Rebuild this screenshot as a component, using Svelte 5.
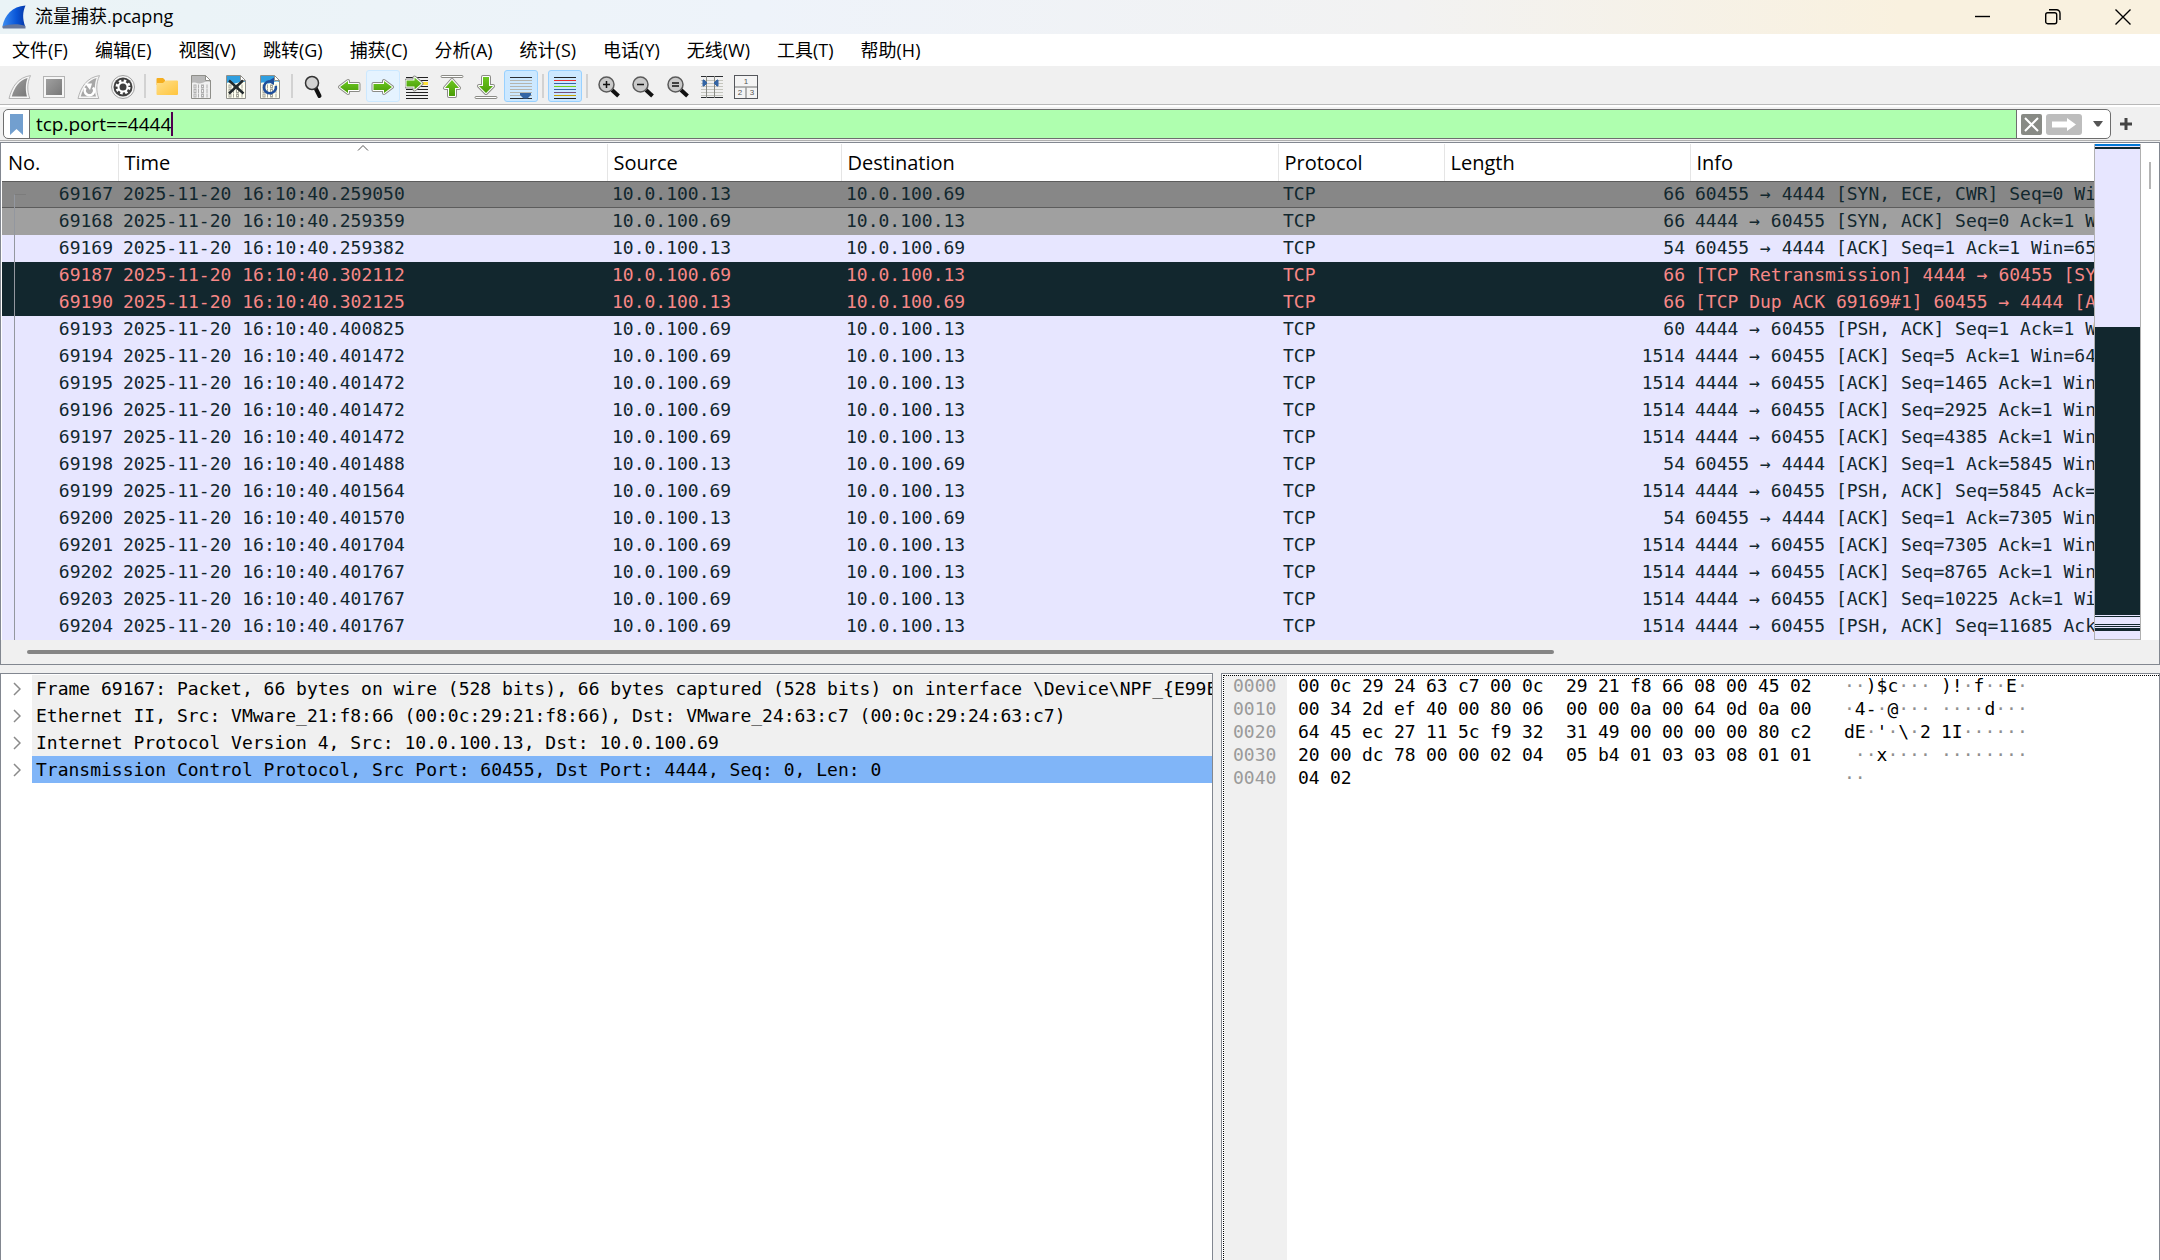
<script>
  const menus = [
    "文件(F)",
    "编辑(E)",
    "视图(V)",
    "跳转(G)",
    "捕获(C)",
    "分析(A)",
    "统计(S)",
    "电话(Y)",
    "无线(W)",
    "工具(T)",
    "帮助(H)",
  ];

  const toolGroups = [
    { size: "four", tools: ["start", "stop", "restart", "options"] },
    { size: "four", tools: ["open", "save", "close", "reload"] },
    {
      size: "seven",
      tools: ["find", "back", "forward", "goto", "first", "last", "autoscroll"],
    },
    { size: "one", tools: ["colorize"] },
    { size: "five", tools: ["zoom-in", "zoom-out", "zoom-reset", "resize", "layout"] },
  ];

  const pressed = ["autoscroll", "colorize"];

  const columns = ["No.", "Time", "Source", "Destination", "Protocol", "Length", "Info"];

  const A = "10.0.100.13";
  const B = "10.0.100.69";

  const packets = [
    [69167, "259050", A, B, 66, "60455 → 4444 [SYN, ECE, CWR] Seq=0 Win", "selected"],
    [69168, "259359", B, A, 66, "4444 → 60455 [SYN, ACK] Seq=0 Ack=1 Wi", "syn"],
    [69169, "259382", A, B, 54, "60455 → 4444 [ACK] Seq=1 Ack=1 Win=655"],
    [69187, "302112", B, A, 66, "[TCP Retransmission] 4444 → 60455 [SYN", "bad"],
    [69190, "302125", A, B, 66, "[TCP Dup ACK 69169#1] 60455 → 4444 [AC", "bad"],
    [69193, "400825", B, A, 60, "4444 → 60455 [PSH, ACK] Seq=1 Ack=1 Wi"],
    [69194, "401472", B, A, 1514, "4444 → 60455 [ACK] Seq=5 Ack=1 Win=642"],
    [69195, "401472", B, A, 1514, "4444 → 60455 [ACK] Seq=1465 Ack=1 Win="],
    [69196, "401472", B, A, 1514, "4444 → 60455 [ACK] Seq=2925 Ack=1 Win="],
    [69197, "401472", B, A, 1514, "4444 → 60455 [ACK] Seq=4385 Ack=1 Win="],
    [69198, "401488", A, B, 54, "60455 → 4444 [ACK] Seq=1 Ack=5845 Win="],
    [69199, "401564", B, A, 1514, "4444 → 60455 [PSH, ACK] Seq=5845 Ack=1"],
    [69200, "401570", A, B, 54, "60455 → 4444 [ACK] Seq=1 Ack=7305 Win="],
    [69201, "401704", B, A, 1514, "4444 → 60455 [ACK] Seq=7305 Ack=1 Win="],
    [69202, "401767", B, A, 1514, "4444 → 60455 [ACK] Seq=8765 Ack=1 Win="],
    [69203, "401767", B, A, 1514, "4444 → 60455 [ACK] Seq=10225 Ack=1 Win"],
    [69204, "401767", B, A, 1514, "4444 → 60455 [PSH, ACK] Seq=11685 Ack="],
  ];

  const layers = [
    "Frame 69167: Packet, 66 bytes on wire (528 bits), 66 bytes captured (528 bits) on interface \\Device\\NPF_{E99E6",
    "Ethernet II, Src: VMware_21:f8:66 (00:0c:29:21:f8:66), Dst: VMware_24:63:c7 (00:0c:29:24:63:c7)",
    "Internet Protocol Version 4, Src: 10.0.100.13, Dst: 10.0.100.69",
    "Transmission Control Protocol, Src Port: 60455, Dst Port: 4444, Seq: 0, Len: 0",
  ];

  const dump = [
    "00 0c 29 24 63 c7 00 0c 29 21 f8 66 08 00 45 02",
    "00 34 2d ef 40 00 80 06 00 00 0a 00 64 0d 0a 00",
    "64 45 ec 27 11 5c f9 32 31 49 00 00 00 00 80 c2",
    "20 00 dc 78 00 00 02 04 05 b4 01 03 03 08 01 01",
    "04 02",
  ].map((line, i) => {
    const bytes = line.split(" ");
    return {
      offset: (i * 16).toString(16).padStart(4, "0"),
      halves: [bytes.slice(0, 8), bytes.slice(8)],
    };
  });

  const toChar = (byte) => {
    const code = parseInt(byte, 16);
    return code >= 32 && code < 127 ? String.fromCharCode(code) : "·";
  };

  let filter = $state("tcp.port==4444");
  let selectedLayer = $state(3);
</script>

{#snippet fin(body)}
  <path d="M1 23.500C4 11.500 10 2.500 22.500.6 19 8 19 16 21.800 23.500z" fill="#f6f6f6" stroke="#b4b4b4" />
  <path d="M3.800 21.500C6.500 12 11.500 5 19.600 3 17.200 9.500 17.500 16 19 21.500z" fill={body} />
{/snippet}

{#snippet page(head, paper, ink)}
  <path d="M2.500.5h14l5 5v18h-19z" fill={paper} stroke="#8f8f8a" />
  <path d="M3 1h13.500v4.500H21V7c-5-1.500-7 2-11 1.500C7 8.200 5 7 3 8z" fill={head} />
  <path d="M16.500.5v5h5z" fill="#fff" stroke="#8f8f8a" />
  <g fill="none" stroke={ink} stroke-width="1">
    {#each [10, 14.5, 19] as y}
      <rect x="5" {y} width="2" height="3" />
      <path d="M9.500 {y - 0.5}v4M18 {y - 0.5}v4" />
      <rect x="12.500" {y} width="2" height="3" />
    {/each}
  </g>
{/snippet}

{#snippet arrow(d)}
  <path {d} fill="none" stroke="#8b8b86" stroke-width="4" stroke-linejoin="round" />
  <path {d} fill="url(#green)" stroke="#fff" stroke-width="2" stroke-linejoin="round" />
  <path {d} fill="url(#green)" />
{/snippet}

{#snippet lens(mark)}
  <path d="M15 15l6.500 6" stroke="#111" stroke-width="4" />
  <circle cx="9.500" cy="9.500" r="7.500" fill="#c9c9c9" stroke="#5a5a5a" stroke-width="1.500" />
  <path d={mark} stroke="#111" stroke-width="1.500" />
{/snippet}

{#snippet icon(name)}
  <svg viewBox="0 0 24 24" width="24" height="24" fill="none" aria-hidden="true">
    {#if name === "start"}
      {@render fin("url(#steel)")}
    {:else if name === "stop"}
      <rect x="1.500" y="1.500" width="21" height="21" fill="#f6f6f6" stroke="#b4b4b4" />
      <rect x="4" y="4" width="16" height="16" fill="url(#steel)" />
    {:else if name === "restart"}
      {@render fin("#a6a6a6")}
      <path d="M8.500 13a4.700 4.700 0 1 0 7.500-.5" stroke="#fff" stroke-width="2.600" />
      <path d="M8 8.500h7l-2 6.500z" fill="#fff" />
    {:else if name === "options"}
      <circle cx="12" cy="12" r="11.500" fill="#f4f4f4" stroke="#a2a2a2" />
      <circle cx="12" cy="12" r="9.500" fill="#3f3f3f" />
      <circle cx="12" cy="12" r="6" stroke="#fff" stroke-width="3" stroke-dasharray="2.400 2.312" />
      <circle cx="12" cy="12" r="4.500" stroke="#fff" stroke-width="2" />
    {:else if name === "open"}
      <path d="M1.500 4q0-1 1-1H8l2 2v5H1.500z" fill="#f5ae1f" />
      <path d="M1.500 8H8l2.500-2.500H22q1 0 1 1V19q0 1-1 1H2.500q-1 0-1-1z" fill="url(#amber)" />
    {:else if name === "save"}
      {@render page("#b9b9b9", "#f1f1f1", "#b0b0b0")}
    {:else if name === "close"}
      {@render page("#2f9fe0", "#fffff0", "#a5a59a")}
      <path d="M5 5.500l14.500 13M19 5.500L5 18.500" stroke="#22292c" stroke-width="2.400" />
    {:else if name === "reload"}
      {@render page("#2f9fe0", "#fffff0", "#a5a59a")}
      <path d="M11.500 6.300a6 6 0 1 0 6.300 4.700" stroke="#1f4f9a" stroke-width="2.600" />
      <path d="M16 2.500v7.500l-6.500-3.500z" fill="#1f4f9a" />
    {:else if name === "find"}
      <path d="M13.500 13l4 8" stroke="#111" stroke-width="4" stroke-linecap="round" />
      <circle cx="10" cy="8" r="6.500" fill="#d2d2d2" stroke="#333" stroke-width="1.500" />
    {:else if name === "back"}
      {@render arrow("M3 12l8-6v3h10.500v6H11v3z")}
    {:else if name === "forward"}
      {@render arrow("M21 12l-8-6v3H2.500v6H13v3z")}
    {:else if name === "goto"}
      <path d="M1 2.500h22M1 5.500h22M1 11.500h22M1 14.500h22M1 17.500h22M1 20.500h22M1 23.500h22" stroke="#222" />
      <path d="M17 7h6v3h-6z" fill="#ffe13a" />
      {@render arrow("M16.500 8.500l-7-6v3H1.500v6h8v3z")}
    {:else if name === "first"}
      <rect x="1" y=".5" width="22" height="2" rx="1" fill="#fff" stroke="#8b8b86" />
      {@render arrow("M12 5l-7 8h4v8h6v-8h4z")}
    {:else if name === "last"}
      {@render arrow("M12 18l-7-7h4V2h6v9h4z")}
      <rect x="1" y="21.500" width="22" height="2" rx="1" fill="#fff" stroke="#8b8b86" />
    {:else if name === "autoscroll"}
      <path d="M1 5.500h22M1 8.500h22M1 11.500h22M1 14.500h22M1 17.500h22M1 20.500h22" stroke="#b5b5ae" />
      <path d="M1 2.500h22M1 23.500h22" stroke="#2a2d30" />
      <path d="M11 18h11v2l-3.500 3.500h-4L11 20z" fill="#3465a4" />
    {:else if name === "colorize"}
      <path d="M1 2.500h22M1 23.500h22" stroke="#222" />
      <path d="M1 5.500h22" stroke="#ef2929" />
      <path d="M1 8.500h22M1 14.500h22" stroke="#3465a4" />
      <path d="M1 11.500h22" stroke="#73d216" />
      <path d="M1 17.500h22" stroke="#75507b" />
      <path d="M1 20.500h22" stroke="#c4a000" />
    {:else if name === "zoom-in"}
      {@render lens("M6 9.500h7M9.500 6v7")}
    {:else if name === "zoom-out"}
      {@render lens("M6 9.500h7")}
    {:else if name === "zoom-reset"}
      {@render lens("M6 8h7M6 11h7")}
    {:else if name === "resize"}
      <path d="M1 5.500h22M1 8.500h22M1 11.500h22M1 14.500h22M1 17.500h22M1 20.500h22" stroke="#c4c5bd" />
      <path d="M1 1.500h22M1 22.500h22" stroke="#2a2d30" />
      <path d="M6.500 1v22M14.500 1v22" stroke="#888a85" />
      <path d="M3 5h1l3 3-3 3H3zM18 5h-1l-3 3 3 3h1z" fill="#3465a4" stroke="#3465a4" />
    {:else if name === "layout"}
      <rect x=".5" y=".5" width="23" height="23" fill="#f4f4f4" stroke="#55575c" />
      <path d="M1 12h22M12 12v11" stroke="#9a9c9c" stroke-width="1.500" />
      <g class="digits">
        <text x="12" y="9">1</text>
        <text x="6" y="20">2</text>
        <text x="18" y="20">3</text>
      </g>
    {/if}
  </svg>
{/snippet}

<svg class="defs" width="0" height="0" aria-hidden="true">
  <defs>
    <linearGradient id="steel" x1="0" y1="0" x2="1" y2="1">
      <stop offset="0" stop-color="#a0a0a0" />
      <stop offset="1" stop-color="#787878" />
    </linearGradient>
    <linearGradient id="green" x1="0" y1="0" x2="0" y2="1">
      <stop offset="0" stop-color="#6cc722" />
      <stop offset="1" stop-color="#4a9c06" />
    </linearGradient>
    <linearGradient id="amber" x1="0" y1="0" x2="1" y2="1">
      <stop offset="0" stop-color="#ffe08c" />
      <stop offset="1" stop-color="#ffc53d" />
    </linearGradient>
    <linearGradient id="sea" x1="0" y1="0" x2="1" y2="0">
      <stop offset="0" stop-color="#3d8df0" />
      <stop offset="0.6" stop-color="#0a56d8" />
      <stop offset="1" stop-color="#0638a8" />
    </linearGradient>
  </defs>
</svg>

<div class="window">
  <header class="titlebar">
    <svg class="logo" viewBox="0 0 24 24" width="24" height="24" aria-hidden="true">
      <path d="M.5 21C3 10 10 1.500 23.500.5c-3 7-3 13-.5 20.500z" fill="url(#sea)" />
      <path d="M0 21.500C8 18.500 17 18.500 23.500 21v2.500H1z" fill="#66779c" />
    </svg>
    <h1>流量捕获.pcapng</h1>
    <div class="window-buttons">
      <button aria-label="Minimize">
        <svg viewBox="0 0 16 16" width="16" height="16"><path d="M0 7.500h15" /></svg>
      </button>
      <button aria-label="Restore">
        <svg viewBox="0 0 16 16" width="16" height="16">
          <rect x=".7" y="3.700" width="11" height="11" rx="2" />
          <path d="M4 .8h7.500a3.500 3.500 0 0 1 3.500 3.500V11" />
        </svg>
      </button>
      <button aria-label="Close">
        <svg viewBox="0 0 16 16" width="16" height="16"><path d="M.5.500l15 15M15.500.500l-15 15" /></svg>
      </button>
    </div>
  </header>

  <nav class="menubar">
    {#each menus as menu}
      <button>{menu}</button>
    {/each}
  </nav>

  <div class="toolbar">
    {#each toolGroups as group}
      <div class="group {group.size}">
        {#each group.tools as tool}
          <button
            class:pressed={pressed.includes(tool)}
            class:hover={tool === "forward"}
            aria-label={tool}
          >
            {@render icon(tool)}
          </button>
        {/each}
      </div>
    {/each}
  </div>

  <div class="filterbar">
    <div class="filter">
      <button class="bookmark" aria-label="Saved filters">
        <svg viewBox="0 0 13 21" width="13" height="21"><path d="M0 0h13v21l-6.500-6L0 21z" fill="#729fcf" /></svg>
      </button>
      <label class="field">
        <input aria-label="Display filter" bind:value={filter} spellcheck="false" />
        <span class="caret"></span>
      </label>
      <button class="clear" aria-label="Clear filter">
        <svg viewBox="0 0 21 21" width="21" height="21">
          <rect width="21" height="21" rx="2" fill="#888a85" />
          <path d="M4 4l13 13M17 4L4 17" stroke="#fff" stroke-width="2" />
        </svg>
      </button>
      <button class="apply" aria-label="Apply filter">
        <svg viewBox="0 0 36 21" width="36" height="21">
          <rect width="36" height="21" rx="3" fill="#bdbdbd" />
          <path d="M6 7.500h15V4l9 6.500-9 6.500v-3.500H6z" fill="#fff" />
        </svg>
      </button>
      <button class="history" aria-label="Recent filters">
        <svg viewBox="0 0 10 6" width="10" height="6"><path d="M0 0h10L6 5.500H4z" fill="#555" /></svg>
      </button>
    </div>
    <button class="add" aria-label="Add filter button">
      <svg viewBox="0 0 12 12" width="12" height="12"><path d="M6 0v12M0 6h12" stroke="#444" stroke-width="3" /></svg>
    </button>
  </div>

  <section class="packets">
    <div class="packet-row">
      <div class="list">
        <table>
          <colgroup>
            <col class="c-no" />
            <col class="c-time" />
            <col class="c-source" />
            <col class="c-destination" />
            <col class="c-protocol" />
            <col class="c-length" />
            <col />
          </colgroup>
          <thead>
            <tr>
              {#each columns as column}
                <th>
                  {column}
                  {#if column === "Time"}
                    <svg class="sort" viewBox="0 0 12 6" width="12" height="6">
                      <path d="M1 5.500l5-5 5 5" fill="none" stroke="#555" />
                    </svg>
                  {/if}
                </th>
              {/each}
            </tr>
          </thead>
          <tbody>
            {#each packets as [no, time, source, destination, length, info, kind]}
              <tr class={kind}>
                <td class="number">{no}</td>
                <td>2025-11-20 16:10:40.{time}</td>
                <td>{source}</td>
                <td>{destination}</td>
                <td>TCP</td>
                <td class="number">{length}</td>
                <td>{info}</td>
              </tr>
            {/each}
          </tbody>
        </table>
        <div class="related"></div>
      </div>
      <div class="minimap"></div>
      <div class="vscroll"><span></span></div>
    </div>
    <div class="hscroll"><span></span></div>
  </section>

  <div class="panes">
    <section class="details">
      <ul>
        {#each layers as layer, i}
          <li>
            <button class:chosen={i === selectedLayer} onclick={() => (selectedLayer = i)}>
              <svg viewBox="0 0 8 14" width="8" height="14"><path d="M1 1l6 6-6 6" fill="none" stroke="#8a8a8a" stroke-width="1.500" /></svg>
              <span>{layer}</span>
            </button>
          </li>
        {/each}
      </ul>
    </section>

    <section class="bytes">
      <div class="dump">
        {#each dump as line}
          <div class="line">
            <span class="offset">{line.offset}</span>
            {#each line.halves as half}
              <span class="half">
                {#each half as byte}<span>{byte}</span>{/each}
              </span>
            {/each}
            {#each line.halves as half}
              <span class="ascii">{#each half as byte}{#if toChar(byte) === "·"}<i>·</i>{:else}{toChar(byte)}{/if}{/each}</span>
            {/each}
          </div>
        {/each}
      </div>
    </section>
  </div>
</div>

<style>
  :global(body) {
    background: #f0f0f0;
  }

  .defs {
    position: absolute;
  }

  .window {
    display: flex;
    flex-direction: column;
    height: 100vh;
    overflow: hidden;
    font-family: "Open Sans", "Noto Sans CJK SC", sans-serif;
    font-size: 18px;
    color: #000;
  }

  button {
    display: flex;
    align-items: center;
    justify-content: center;
    margin: 0;
    padding: 0;
    border: 0;
    background: none;
    font: inherit;
    color: inherit;
  }

  svg {
    display: block;
    flex: none;
  }

  /* title bar */
  .titlebar {
    display: flex;
    align-items: center;
    flex: none;
    height: 34px;
    background: linear-gradient(90deg, #eaf3f6, #eef3fa 35%, #f2f2f2 65%, #f9f1df 88%);
  }

  .logo {
    margin: 0 9px 0 2px;
  }

  h1 {
    flex: 1;
    margin: 0;
    font-size: 18px;
    font-weight: normal;
    line-height: 32px;
    height: 34px;
  }

  .window-buttons {
    display: flex;
    padding-right: 2px;
  }

  .window-buttons button {
    width: 70px;
    height: 34px;
  }

  .window-buttons path,
  .window-buttons rect {
    fill: none;
    stroke: #000;
    stroke-width: 1.4;
  }

  /* menus */
  .menubar {
    display: flex;
    flex: none;
    gap: 2px;
    height: 32px;
    border-bottom: 2px solid #f0f0f0;
    background: #fff;
  }

  .menubar button {
    padding: 0 13px 2px 12px;
  }

  /* tool bar */
  .toolbar {
    display: flex;
    flex: none;
    height: 36px;
    padding-left: 3px;
    border-bottom: 1px solid #b8b8b8;
    background: #f0f0f0;
  }

  .group {
    position: relative;
    display: flex;
    align-items: center;
    margin-right: 10px;
  }

  .group:not(:last-child)::after {
    content: "";
    position: absolute;
    right: -6px;
    top: 6px;
    width: 2px;
    height: 24px;
    background: #d2d2d2;
  }

  .one {
    width: 34px;
  }

  .four {
    width: 137px;
  }

  .five {
    width: 171px;
  }

  .seven {
    width: 241px;
  }

  .group button {
    box-sizing: border-box;
    flex: 1;
    height: 32px;
    padding-top: 1px;
    border: 1px solid transparent;
    border-radius: 3px;
  }

  .group .hover {
    border-color: #cce8ff;
    background: #e5f3ff;
  }

  .group .pressed {
    border-color: #99d1ff;
    background: #cce8ff;
  }

  .digits {
    font-family: "Liberation Sans", sans-serif;
    font-size: 8px;
    text-anchor: middle;
    fill: #555;
  }

  /* display filter */
  .filterbar {
    display: flex;
    align-items: flex-start;
    flex: none;
    height: 31px;
    padding: 2px 28px 0 3px;
    border-top: 2px solid #fff;
    border-bottom: 1px solid #b0b0b0;
    background: #f0f0f0;
  }

  .filter {
    display: flex;
    flex: 1;
    box-sizing: border-box;
    height: 30px;
    border: 1px solid #6e6e6e;
    border-radius: 5px;
    background: #fff;
    overflow: hidden;
  }

  .bookmark {
    width: 26px;
    border-right: 1px solid #6e6e6e;
  }

  .field {
    display: flex;
    align-items: center;
    flex: 1;
    padding-left: 6px;
    border-right: 1px solid #6e6e6e;
    background: #afffaf;
  }

  input {
    field-sizing: content;
    padding: 0;
    border: 0;
    outline: 0;
    background: none;
    font-family: inherit;
    font-size: 19px;
    line-height: 24px;
  }

  .caret {
    width: 2px;
    height: 24px;
    background: #500050;
  }

  .clear {
    width: 29px;
  }

  .apply {
    width: 36px;
  }

  .history {
    width: 28px;
    padding-left: 4px;
  }

  .add {
    height: 30px;
    margin-left: 9px;
  }

  /* packet list */
  .packets {
    flex: none;
    margin-top: 1px;
    border: 1px solid #828790;
    background: #fff;
  }

  .packet-row {
    display: flex;
    padding: 1px 0 0 1px;
  }

  .list {
    position: relative;
    flex: 1;
    min-width: 0;
    overflow: hidden;
  }

  table {
    width: 100%;
    table-layout: fixed;
    border-collapse: collapse;
    font-family: "DejaVu Sans Mono", monospace;
    font-size: 18px;
    color: #12272e;
  }

  .c-no {
    width: 116px;
  }

  .c-time {
    width: 489px;
  }

  .c-source {
    width: 234px;
  }

  .c-destination {
    width: 437px;
  }

  .c-protocol {
    width: 166px;
  }

  .c-length {
    width: 246px;
  }

  th {
    position: relative;
    height: 37px;
    padding: 0 0 0 6px;
    border-right: 1px solid #e5e5e5;
    font-family: "Open Sans", sans-serif;
    font-size: 20px;
    font-weight: normal;
    line-height: 26px;
    text-align: left;
    color: #000;
  }

  th:last-child {
    border-right: 0;
  }

  .sort {
    position: absolute;
    top: 1px;
    left: 50%;
    margin-left: -6px;
  }

  td {
    padding: 0 5px 2px;
    line-height: 25px;
    white-space: nowrap;
    overflow: hidden;
    background: #e7e6ff;
  }

  td:last-child {
    padding-right: 0;
  }

  .number {
    text-align: right;
  }

  .selected td {
    background: #878787;
    box-shadow: inset 0 1px #5c5c5c, inset 0 -1px #5c5c5c;
  }

  .syn td {
    background: #a0a0a0;
  }

  .bad td {
    background: #12272e;
    color: #f78787;
  }

  /* bracket joining the packets of one conversation */
  .related {
    position: absolute;
    left: 12px;
    top: 50px;
    bottom: 0;
    width: 11px;
    border-left: 1px solid #93979f;
    border-top: 1px solid #7c7c7c;
  }

  .minimap {
    box-sizing: border-box;
    width: 47px;
    border: 1px solid #b0b0b0;
    border-top: 0;
    background: linear-gradient(
      #0078d7 0 2px,
      #e7e6ff 2px 3px,
      #12272e 3px 5px,
      #e7e6ff 5px 183px,
      #12272e 183px 471px,
      #e7e6ff 471px 472px,
      #12272e 472px 473px,
      #e7e6ff 473px 480px,
      #12272e 480px 481px,
      #e7e6ff 481px 482px,
      #12272e 482px 483px,
      #e7e6ff 483px 484px,
      #12272e 484px 487px,
      #e7e6ff 487px
    );
  }

  .vscroll {
    width: 18px;
    padding-top: 18px;
  }

  .vscroll span {
    display: block;
    width: 2px;
    height: 27px;
    margin-left: 8px;
    background: #b4b4b4;
  }

  .hscroll {
    height: 24px;
    padding: 0 26px;
    display: flex;
    align-items: center;
    background: #f0f0f0;
  }

  .hscroll span {
    width: 72.5%;
    height: 4px;
    border-radius: 2px;
    background: #858585;
  }

  /* lower panes */
  .panes {
    display: grid;
    grid-template-columns: 1213fr 939fr;
    gap: 8px;
    flex: 1;
    min-height: 0;
    margin-top: 8px;
    font-family: "DejaVu Sans Mono", monospace;
    font-size: 18px;
  }

  .details {
    min-width: 0;
    overflow: hidden;
    padding-top: 1px;
    border: 1px solid #828790;
    border-bottom: 0;
    background: #fff;
  }

  ul {
    margin: 0;
    padding: 0;
    list-style: none;
  }

  li button {
    width: 100%;
    justify-content: flex-start;
  }

  li svg {
    margin: 0 11px 0 12px;
  }

  li span {
    flex: 1;
    min-width: 0;
    overflow: hidden;
    padding-left: 4px;
    line-height: 27px;
    text-align: left;
    white-space: nowrap;
    background: #f0f0f0;
  }

  li .chosen span {
    background: #80b5f8;
  }

  .bytes {
    display: flex;
    min-width: 0;
    overflow: hidden;
    padding: 1px 0 0 1px;
    border: 1px solid #828790;
    border-bottom: 0;
    background: #fff;
  }

  .dump {
    flex: 1;
    border-top: 1px dotted #000;
    border-left: 1px dotted #000;
    background: linear-gradient(90deg, #f0f0f0 63px, #fff 63px);
  }

  .line {
    display: flex;
    height: 23px;
    line-height: 20px;
    white-space: pre;
  }

  .offset {
    width: 65px;
    padding-left: 9px;
    color: #9a9a9a;
  }

  .half {
    display: flex;
    width: 268px;
  }

  .half + .half {
    width: 278px;
  }

  .half span {
    width: 32px;
  }

  .ascii {
    width: 97px;
  }

  i {
    font-style: normal;
    color: #8f8f8f;
  }
</style>
